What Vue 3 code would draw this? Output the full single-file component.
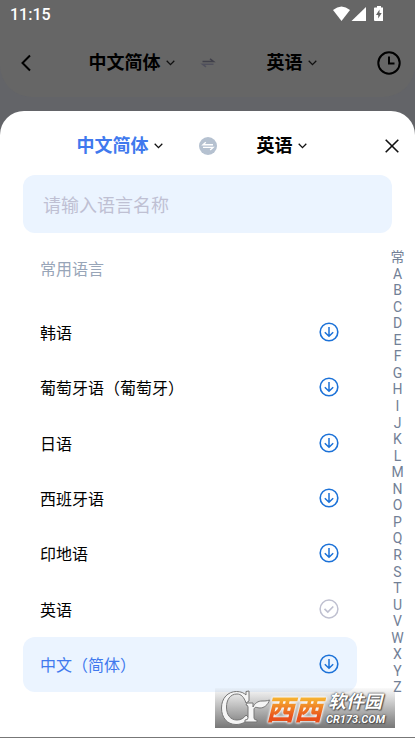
<script setup>
import { ref } from 'vue'

const query = ref('')
const selected = ref('中文（简体）')
const languages = [
  { name: '韩语', ready: false },
  { name: '葡萄牙语（葡萄牙）', ready: false },
  { name: '日语', ready: false },
  { name: '西班牙语', ready: false },
  { name: '印地语', ready: false },
  { name: '英语', ready: true },
  { name: '中文（简体）', ready: false },
]
const letters = ['常', ...'ABCDEFGHIJKLMNOPQRSTUVWXYZ']
</script>

<template>
  <div class="screen">
    <div class="backdrop">
      <div class="status">
        <span class="time">11:15</span>
        <svg class="status-icons" width="50" height="16" viewBox="0 0 50 16" fill="#fff" aria-hidden="true">
          <path d="M0 4Q8.500 -3 17 4L8.500 15Z" />
          <path d="M33 1V15H18.500Z" />
          <path d="M44 0h4v1.500h1.500q.8 0 .8.800V14q0 1-1 1H42q-1 0-1-1V2.300q0-.8.800-.8H44Z" />
          <path d="M46.500 3.500L43 9h2.200v3.500L48.700 7h-2.200Z" fill="#666" />
        </svg>
      </div>
      <header class="bar top-bar">
        <div class="side left">
          <button class="icon-btn" type="button" aria-label="返回">
            <svg width="12" height="18" viewBox="0 0 12 18"><path d="M10 1.500L2.500 9L10 16.500" fill="none" stroke="#000" stroke-width="2" /></svg>
          </button>
          <button class="lang" type="button">中文简体
            <svg class="chev" width="9" height="6" viewBox="0 0 9 6"><path d="M.7 .8L4.500 4.600L8.300 .8" /></svg>
          </button>
        </div>
        <button class="icon-btn swap" type="button" aria-label="交换语言">
          <svg width="18" height="18" viewBox="0 0 18 18" fill="none" stroke="#40404a" stroke-width="1.500">
            <path d="M3.500 7.500H14.500L11 4.800" /><path d="M14.500 10.200H3.500L7 12.900" stroke="#50505c" />
          </svg>
        </button>
        <div class="side right">
          <button class="lang" type="button">英语
            <svg class="chev" width="9" height="6" viewBox="0 0 9 6"><path d="M.7 .8L4.500 4.600L8.300 .8" /></svg>
          </button>
          <button class="icon-btn" type="button" aria-label="历史记录">
            <svg width="24" height="24" viewBox="0 0 24 24" fill="none" stroke="#000" stroke-width="2"><circle cx="12" cy="12" r="10.700" /><path d="M12 5.500V12.500H17.500" /></svg>
          </button>
        </div>
      </header>
    </div>

    <main class="sheet">
      <div class="bar sheet-bar">
        <div class="side left">
          <button class="lang active" type="button">中文简体
            <svg class="chev" width="9" height="6" viewBox="0 0 9 6"><path d="M.7 .8L4.500 4.600L8.300 .8" /></svg>
          </button>
        </div>
        <button class="icon-btn swap" type="button" aria-label="交换语言">
          <svg width="18" height="18" viewBox="0 0 18 18"><circle cx="9" cy="9" r="9" fill="#b5c1d0" /><path d="M14 7.800H4L6.800 5.200M4 10.400H14L11.200 13" fill="none" stroke="#fff" stroke-width="1.400" /></svg>
        </button>
        <div class="side right">
          <button class="lang" type="button">英语
            <svg class="chev" width="9" height="6" viewBox="0 0 9 6"><path d="M.7 .8L4.500 4.600L8.300 .8" /></svg>
          </button>
          <button class="icon-btn" type="button" aria-label="关闭">
            <svg width="14" height="14" viewBox="0 0 14 14"><path d="M.7 .7L13.300 13.300M13.300 .7L.7 13.300" fill="none" stroke="#111" stroke-width="1.600" /></svg>
          </button>
        </div>
      </div>

      <input v-model="query" class="search" type="text" placeholder="请输入语言名称" aria-label="请输入语言名称" />

      <div class="content">
        <section class="common">
          <h2>常用语言</h2>
          <ul class="list">
            <li v-for="l in languages" :key="l.name">
              <button class="row" :class="{ selected: selected === l.name }" type="button" @click="selected = l.name">
                <span>{{ l.name }}</span>
                <svg v-if="l.ready" width="20" height="20" viewBox="0 0 20 20" fill="none" stroke="#bfc0d0" stroke-width="1.500"><circle cx="10" cy="10" r="8.900" /><path d="M5.500 9.800L8.800 13L14.300 7.500" stroke-width="1.700" /></svg>
                <svg v-else width="20" height="20" viewBox="0 0 20 20" fill="none" stroke="#1c72d8" stroke-width="1.600"><circle cx="10" cy="10" r="8.800" /><path d="M10 5V14M5.800 10.200L10 14.200L14.200 10.200" stroke-width="1.500" /></svg>
              </button>
            </li>
          </ul>
        </section>
        <nav class="index" aria-label="索引">
          <a v-for="c in letters" :key="c" :href="'#' + c">{{ c }}</a>
        </nav>
      </div>
    </main>

    <div class="mark">
      <svg class="mark-logo" width="50" height="38" viewBox="0 0 50 38" aria-hidden="true">
        <path d="M26 2.500L29 2V12L26 14C24 8 21 5 17 5C10 5 6.500 11 6.500 18C6.500 26 10.500 31 17 31C21 31 24 29 26 26L29 29C26 33 22 35.500 16 35.500C7 35.500 1.500 28.500 1.500 19C1.500 9 8 2.500 16.500 2.500C21 2.500 24 4 26 6Z" fill="#f5f5f5" stroke="#777" stroke-width="1" />
        <path d="M27 14H33V18C35 14 38 12 42 12C45 12 47 12 49.500 11C48 16 44 19 40 19C37 19 35 17 34 20V29Q34 31 37 31V33H25V31Q28 31 28 29V18Q28 16 26 16Z" fill="#f5f5f5" stroke="#777" stroke-width="1" />
      </svg>
      <span class="mark-name">西西</span>
      <span class="mark-site"><span class="mark-cn">软件园</span><span class="mark-url">CR173.COM</span></span>
    </div>
  </div>
</template>

<style>
body {
  margin: 0;
  background: #636468;
}
</style>

<style scoped>
.screen {
  position: relative;
  display: flex;
  flex-direction: column;
  min-height: 100vh;
  box-sizing: border-box;
  border-bottom: 1px solid #777;
  font-family: Roboto, "Noto Sans CJK SC", sans-serif;
  color: #000;
  background: #636468;
}
button {
  border: 0;
  padding: 0;
  background: none;
  font: inherit;
  color: inherit;
  cursor: pointer;
}
svg {
  display: block;
  flex: none;
}
.backdrop {
  background: #666;
  border-radius: 0 0 32px 32px;
}
.status {
  display: flex;
  justify-content: space-between;
  align-items: center;
  height: 28px;
  padding: 0 32px 0 10px;
}
.time {
  color: #fff;
  font-size: 16px;
  font-weight: 500;
}
.bar {
  display: grid;
  grid-template-columns: 1fr auto 1fr;
  align-items: center;
}
.top-bar {
  height: 69px;
}
.side {
  display: flex;
  align-items: center;
  justify-content: space-between;
}
.top-bar .left {
  padding: 0 24px 0 20px;
}
.top-bar .right {
  padding: 0 14px 0 50px;
}
.sheet-bar .left {
  justify-content: flex-end;
  padding-right: 36px;
}
.sheet-bar .right {
  padding: 0 16px 0 40px;
}
.lang {
  display: flex;
  align-items: center;
  gap: 5px;
  font-size: 18px;
  font-weight: 700;
  line-height: 24px;
}
.active {
  color: #4079ee;
}
.chev {
  fill: none;
  stroke: #111;
  stroke-width: 1.3;
}
.sheet {
  flex: 1;
  margin-top: 14px;
  background: #fff;
  border-radius: 24px 24px 0 0;
}
.sheet-bar {
  height: 64px;
  padding-top: 5px;
  box-sizing: border-box;
}
.search {
  display: block;
  width: calc(100% - 46px);
  height: 58px;
  margin: 0 23px;
  padding: 0 20px;
  box-sizing: border-box;
  border: 0;
  border-radius: 12px;
  outline: 0;
  background: #ebf4ff;
  font: 18px "Noto Sans CJK SC", sans-serif;
  color: #000;
}
.search::placeholder {
  color: #bfc0d3;
  opacity: 1;
}
.content {
  display: flex;
  align-items: flex-start;
  padding-top: 16px;
}
.common {
  flex: 1;
  padding: 9px 23px 0;
}
h2 {
  margin: 0 0 22px;
  padding-left: 17px;
  font-size: 16px;
  font-weight: 400;
  line-height: 24px;
  color: #98a5b8;
}
.list {
  display: grid;
  grid-auto-rows: 1fr;
  height: 388px;
  margin: 0;
  padding: 0;
  list-style: none;
}
.row {
  display: flex;
  align-items: center;
  justify-content: space-between;
  width: 100%;
  height: 100%;
  padding: 0 18px 0 17px;
  border-radius: 12px;
  font-size: 16px;
}
.selected {
  background: #ebf4ff;
  color: #4079ee;
}
.index {
  display: grid;
  grid-auto-rows: 1fr;
  width: 35px;
  height: 447px;
}
.index a {
  height: 16px;
  font-size: 14px;
  line-height: 16px;
  text-align: center;
  text-decoration: none;
  color: #728096;
}
.mark {
  position: absolute;
  right: 20px;
  bottom: 9px;
  display: flex;
  align-items: center;
  width: 180px;
  height: 40px;
  padding-left: 5px;
  box-sizing: border-box;
  background: linear-gradient(rgba(160, 160, 160, 0.05), #777);
}
.mark-logo {
  margin-right: -8px;
}
.mark-name {
  padding: 0 4px;
  font: italic 900 28px/38px "Noto Sans CJK SC", sans-serif;
  color: #f08020;
  background: linear-gradient(#f6b030 25%, #e8501c 75%);
  background-clip: text;
  -webkit-text-fill-color: transparent;
  filter: drop-shadow(0 0 1px #fff) drop-shadow(0 0 1px #fff);
}
.mark-site {
  display: flex;
  flex-direction: column;
  color: #fff;
  font-style: italic;
  font-weight: 700;
  text-shadow: 0 0 1px #444, 0 0 2px #444, 1px 1px 1px #555;
}
.mark-cn {
  padding-left: 2px;
  font-size: 18px;
  line-height: 24px;
}
.mark-url {
  font-size: 11px;
  line-height: 12px;
}
</style>
